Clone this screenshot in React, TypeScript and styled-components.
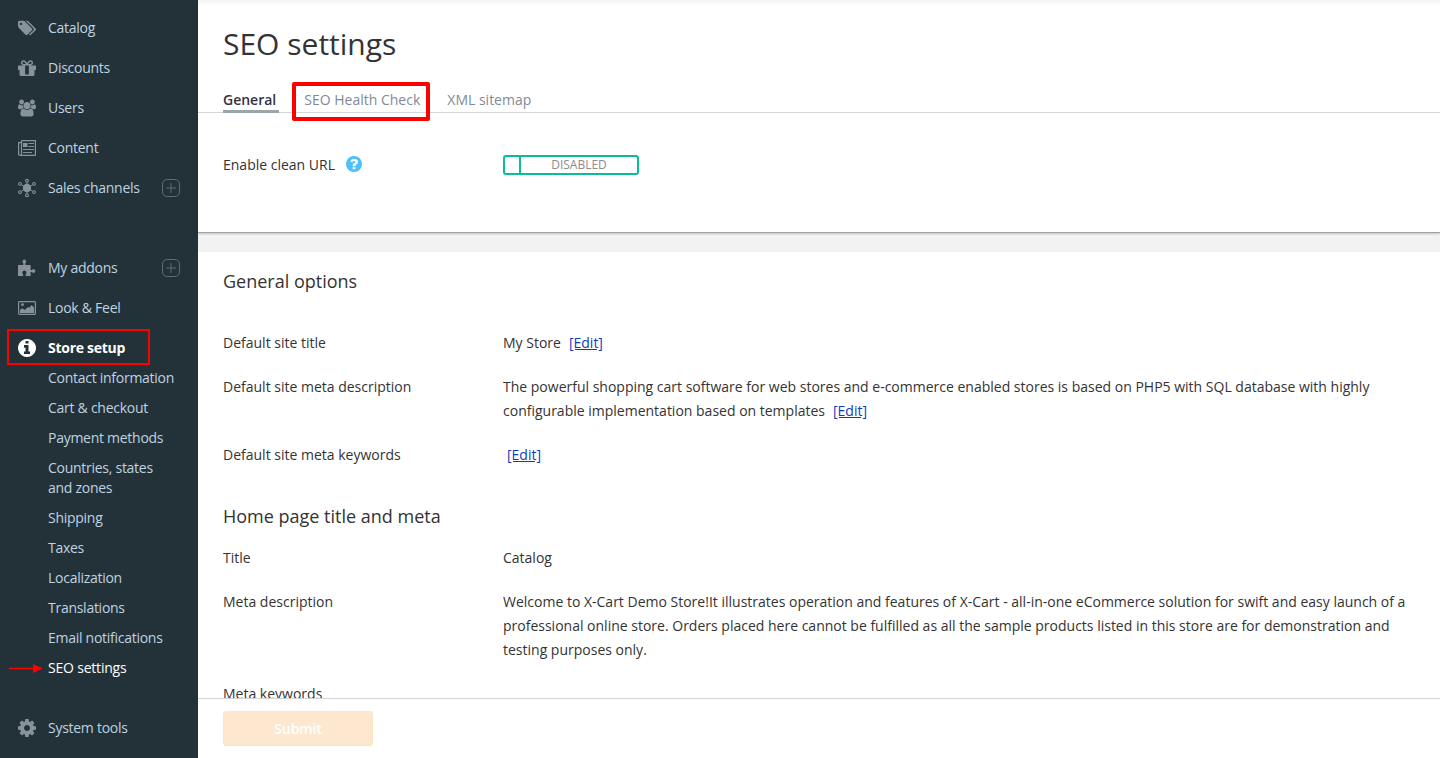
import React from "react";
import styled, { createGlobalStyle, css } from "styled-components";

const GlobalStyle = createGlobalStyle`
  * { box-sizing: border-box; }
  html, body { margin: 0; padding: 0; }
  body {
    font-family: "Open Sans", sans-serif;
    font-size: 14px;
    color: #333;
    background: #fff;
    overflow: hidden;
  }
`;

const Page = styled.div`
  display: flex;
  width: 100%;
  height: 758px;
  overflow: hidden;
`;

const Sidebar = styled.nav`
  flex: 0 0 198px;
  padding-top: 8px;
  background: #233239;
  letter-spacing: -0.27px;
`;

const MenuGroup = styled.div<{ $gap?: number }>`
  margin-top: ${(p) => p.$gap ?? 0}px;
`;

const MenuItem = styled.a<{ $active?: boolean }>`
  position: relative;
  display: flex;
  align-items: center;
  height: 40px;
  padding: 0 18px;
  color: ${(p) => (p.$active ? "#fff" : "#bfd3e0")};
  font-weight: ${(p) => (p.$active ? 700 : 400)};
`;

const MenuIcon = styled.svg<{ $active?: boolean }>`
  flex: none;
  width: 18px;
  height: 18px;
  margin-right: 12px;
  color: ${(p) => (p.$active ? "#fff" : "#87929a")};
`;

const MenuLabel = styled.span`
  flex: 1;
  padding-bottom: 1px;
  line-height: 19px;
  white-space: nowrap;
`;

const AddIcon = styled.svg`
  flex: none;
  width: 18px;
  height: 18px;
  color: #5e6b73;
`;

const SubMenu = styled.div`
  margin-top: -5px;
`;

const SubItem = styled.a<{ $active?: boolean }>`
  position: relative;
  display: block;
  padding: 5px 10px 5px 48px;
  line-height: 20px;
  color: ${(p) => (p.$active ? "#fff" : "#bfd3e0")};
  letter-spacing: ${(p) => (p.$active ? "-0.2px" : "inherit")};
  white-space: pre-line;
`;

const outline = css`
  position: absolute;
  pointer-events: none;
`;

const StoreHighlight = styled.span`
  ${outline}
  left: 7px;
  top: 1px;
  width: 143px;
  height: 36px;
  border: 2px solid #fe0000;
`;

const TabHighlight = styled.span`
  ${outline}
  left: -12px;
  top: -6px;
  width: 138px;
  height: 39px;
  border: 4px solid #fe0000;
  border-radius: 2px;
`;

const Arrow = styled.svg`
  ${outline}
  left: 9px;
  top: 11px;
  width: 34px;
  height: 9px;
`;

const Main = styled.main`
  flex: 1;
  min-width: 0;
  display: flex;
  flex-direction: column;
  background: #f2f2f2;
`;

const TopPanel = styled.section`
  flex: none;
  height: 233px;
  background: linear-gradient(#f2f2f2 0, #fff 5px);
  border-bottom: 1px solid #a3a3a3;
  box-shadow: 0 1px 2px rgba(0, 0, 0, 0.2);
`;

const Title = styled.h1`
  margin: 0;
  padding: 23px 25px 0;
  height: 88px;
  font-size: 30px;
  font-weight: 400;
  line-height: 42px;
`;

const Tabs = styled.div`
  display: flex;
  height: 25px;
  padding-left: 25px;
  border-bottom: 1px solid #d3d6da;
`;

const Tab = styled.a<{ $active?: boolean }>`
  position: relative;
  height: 25px;
  margin-right: 25px;
  padding-right: ${(p) => (p.$active ? 3 : 2)}px;
  line-height: 24px;
  color: ${(p) => (p.$active ? "#333340" : "#808b96")};
  font-weight: ${(p) => (p.$active ? 600 : 400)};
  border-bottom: ${(p) => (p.$active ? "3px solid #9ba6aa" : "0")};
  white-space: nowrap;
`;

const Setting = styled.div`
  display: flex;
  align-items: center;
  padding: 40px 25px 0;
  height: 64px;
`;

const SettingLabel = styled.div`
  display: flex;
  align-items: center;
  width: 280px;
  line-height: 24px;
`;

const HelpIcon = styled.svg`
  width: 16px;
  height: 16px;
  margin: -3px 0 0 11px;
  color: #4dc0ff;
`;

const Toggle = styled.div`
  display: flex;
  width: 136px;
  height: 20px;
  border: 2px solid #09bd97;
  border-radius: 3px;
`;

const ToggleHandle = styled.span`
  width: 16px;
  border-right: 2px solid #09bd97;
`;

const ToggleText = styled.span`
  flex: 1;
  font-size: 12px;
  line-height: 16px;
  text-align: center;
  color: #8c8c8c;
`;

const Content = styled.section`
  flex: 1;
  min-height: 0;
  margin-top: 19px;
  padding: 16px 25px 0;
  background: #fff;
  overflow: hidden;
`;

const Heading = styled.h2<{ $top: number; $bottom: number }>`
  margin: ${(p) => p.$top}px 0 ${(p) => p.$bottom}px;
  font-size: 18px;
  font-weight: 400;
  line-height: 26px;
`;

const Row = styled.div`
  display: flex;
  margin-bottom: 20px;
  line-height: 24px;
`;

const RowLabel = styled.div`
  flex: 0 0 280px;
`;

const RowValue = styled.div`
  white-space: pre;
`;

const EditLink = styled.a<{ $indent: number }>`
  margin-left: ${(p) => p.$indent}px;
  color: #0f3cbc;
  text-decoration: underline;
`;

const Footer = styled.footer`
  flex: none;
  height: 60px;
  padding: 12px 25px;
  background: #fff;
  border-top: 1px solid #d3d3d3;
`;

const Submit = styled.button`
  display: block;
  width: 150px;
  height: 35px;
  padding: 0;
  border: 1px solid #fde5c4;
  border-radius: 3px;
  background: #fde8cf;
  color: #fff;
  font: 600 14px "Open Sans", sans-serif;
  letter-spacing: -0.1px;
`;

const icons = {
  tags: {
    box: "0 66 1899 1640",
    art: (
      <path d="M448 448q0-53-37.5-90.5t-90.5-37.5-90.5 37.5-37.5 90.5 37.5 90.5 90.5 37.5 90.5-37.5 37.5-90.5zm1067 576q0 53-37 90l-491 492q-39 37-91 37-53 0-90-37l-715-716q-38-37-64.5-101t-26.5-117v-416q0-52 38-90t90-38h416q53 0 117 26.5t102 64.5l715 714q37 39 37 91zm384 0q0 53-37 90l-491 492q-39 37-91 37-36 0-59-14t-53-45l470-470q37-37 37-90 0-52-37-91l-715-714q-38-38-102-64.5t-117-26.5h224q53 0 117 26.5t102 64.5l715 714q37 39 37 91z" />
    ),
  },
  gift: {
    box: "0 96 1536 1536",
    art: (
      <path d="M928 1356v-716h-320v716q0 25 18 38.5t46 13.5h192q28 0 46-13.5t18-38.5zm-456-844h195l-126-161q-26-31-69-31-40 0-68 28t-28 68 28 68 68 28zm688-96q0-40-28-68t-68-28q-43 0-69 31l-125 161h194q40 0 68-28t28-68zm376 256v320q0 14-9 23t-23 9h-96v416q0 40-28 68t-68 28h-1088q-40 0-68-28t-28-68v-416h-96q-14 0-23-9t-9-23v-320q0-14 9-23t23-9h440q-93 0-158.5-65.5t-65.5-158.5 65.5-158.5 158.5-65.5q107 0 168 77l128 165 128-165q61-77 168-77 93 0 158.5 65.5t65.5 158.5-65.5 158.5-158.5 65.5h440q14 0 23 9t9 23z" />
    ),
  },
  users: {
    box: "0 -64 1920 1920",
    art: (
      <path d="M593 896q-162 5-265 128h-134q-82 0-138-40.5t-56-118.5q0-353 124-353 6 0 43.5 21t97.5 42.5 119 21.5q67 0 133-23-5 37-5 66 0 139 81 256zm1071 637q0 120-73 189.5t-194 69.5h-874q-121 0-194-69.5t-73-189.5q0-53 3.5-103.5t14-109 26.5-108.5 43-97.5 62-81 85.5-53.5 111.5-20q10 0 43 21.5t73 48 107 48 135 21.5 135-21.5 107-48 73-48 43-21.5q61 0 111.5 20t85.5 53.5 62 81 43 97.5 26.5 108.5 14 109 3.5 103.5zm-1024-1277q0 106-75 181t-181 75-181-75-75-181 75-181 181-75 181 75 75 181zm704 384q0 159-112.5 271.5t-271.5 112.5-271.5-112.5-112.5-271.5 112.5-271.5 271.5-112.5 271.5 112.5 112.5 271.5zm576 225q0 78-56 118.5t-138 40.5h-134q-103-123-265-128 81-117 81-256 0-29-5-66 66 23 133 23 59 0 119-21.5t97.5-42.5 43.5-21q124 0 124 353zm-128-609q0 106-75 181t-181 75-181-75-75-181 75-181 181-75 181 75 75 181z" />
    ),
  },
  news: {
    box: "0 0 18 18",
    art: (
      <>
        <path
          d="M3.500 1.600h13.900v14.800H2a1.400 1.400 0 0 1-1.400-1.400V3.600h2.900M3.500 1.600V15q0 1.400-1.500 1.400"
          fill="none"
          stroke="currentColor"
          strokeWidth="1.200"
        />
        <path d="M5 4h4.500v4H5zM10.500 4H16v1h-5.500zM10.500 7H16v1h-5.500zM5 10h11v1H5zM5 13h9v1H5z" />
      </>
    ),
  },
  hub: {
    box: "0 0 18 18",
    art: (
      <>
        <circle cx="9" cy="9" r="4.200" />
        <path
          d="M9 9V3M9 9v6M9 9L3.600 5.900M9 9l5.400-3.100M9 9l-5.400 3.100M9 9l5.400 3.100"
          stroke="currentColor"
        />
        <g fill="none" stroke="currentColor" strokeWidth="1.100">
          <circle cx="9" cy="1.800" r="1.400" />
          <circle cx="9" cy="16.200" r="1.400" />
          <circle cx="2" cy="4.900" r="1.400" />
          <circle cx="16" cy="4.900" r="1.400" />
          <circle cx="2" cy="13.100" r="1.400" />
          <circle cx="16" cy="13.100" r="1.400" />
        </g>
      </>
    ),
  },
  puzzle: {
    box: "0 0 18 18",
    art: (
      <path d="M0 6h4.400Q5.600 6 5.600 5L4.700 3.600A1.900 1.900 0 1 1 7.900 3.600L7 5Q7 6 8.200 6H12.600V10.200Q12.600 11.300 13.500 11.300L14.500 10.600A1.800 1.800 0 1 1 14.500 13.500L13.500 12.800Q12.600 12.800 12.600 13.800V17H8.500Q7.500 17 7.500 16L8.200 14.700A2.100 2.100 0 1 0 4.600 14.700L5.300 16Q5.300 17 4.300 17H0z" />
    ),
  },
  image: {
    box: "0 0 18 18",
    art: (
      <>
        <rect x=".6" y="2.600" width="16.800" height="12.800" rx=".8" fill="none" stroke="currentColor" strokeWidth="1.200" />
        <circle cx="4.500" cy="5.700" r="1.400" />
        <path d="M2 14v-3l2.200-1.800L6.700 11l3.300-3 1.400.8L13.700 6 16 8.500V14z" />
      </>
    ),
  },
  info: {
    box: "0 128 1536 1536",
    art: (
      <path d="M1024 1376v-160q0-14-9-23t-23-9h-96v-512q0-14-9-23t-23-9h-320q-14 0-23 9t-9 23v160q0 14 9 23t23 9h96v320h-96q-14 0-23 9t-9 23v160q0 14 9 23t23 9h448q14 0 23-9t9-23zm-128-896v-160q0-14-9-23t-23-9h-192q-14 0-23 9t-9 23v160q0 14 9 23t23 9h192q14 0 23-9t9-23zm640 416q0 209-103 385.500t-279.500 279.500-385.500 103-385.500-103-279.500-279.500-103-385.500 103-385.500 279.500-279.500 385.500-103 385.500 103 279.500 279.500 103 385.500z" />
    ),
  },
  cog: {
    box: "0 128 1536 1536",
    art: (
      <path d="M1024 896q0-106-75-181t-181-75-181 75-75 181 75 181 181 75 181-75 75-181zm512-109v222q0 12-8 23t-20 13l-185 28q-19 54-39 91 35 50 107 138 10 12 10 25t-9 23q-27 37-99 108t-94 71q-12 0-26-9l-138-108q-44 23-91 38-16 136-29 186-7 28-36 28h-222q-14 0-24.500-8.500t-11.500-21.500l-28-184q-49-16-90-37l-141 107q-10 9-25 9-14 0-25-11-126-114-165-168-7-10-7-23 0-12 8-23 15-21 51-66.500t54-70.500q-27-50-41-99l-183-27q-13-2-21-12.500t-8-23.500v-222q0-12 8-23t19-13l186-28q14-46 39-92-40-57-107-138-10-12-10-24 0-10 9-23 26-36 98.500-107.500t94.500-71.500q13 0 26 10l138 107q44-23 91-38 16-136 29-186 7-28 36-28h222q14 0 24.500 8.500t11.500 21.500l28 184q49 16 90 37l142-107q9-9 24-9 13 0 25 10 129 119 165 170 7 8 7 22 0 12-8 23-15 21-51 66.500t-54 70.500q26 50 41 98l183 28q13 2 21 12.500t8 23.500z" />
    ),
  },
};

type IconName = keyof typeof icons;

interface EntryProps {
  icon: IconName;
  label: string;
  active?: boolean;
  addable?: boolean;
}

function Entry({ icon, label, active, addable }: EntryProps) {
  return (
    <MenuItem $active={active}>
      <MenuIcon $active={active} viewBox={icons[icon].box} fill="currentColor">
        {icons[icon].art}
      </MenuIcon>
      <MenuLabel>{label}</MenuLabel>
      {addable && (
        <AddIcon viewBox="0 0 18 18" fill="none" stroke="currentColor">
          <rect x=".5" y=".5" width="17" height="17" rx="4.500" />
          <path d="M9 4v10M4 9h10" />
        </AddIcon>
      )}
      {active && <StoreHighlight />}
    </MenuItem>
  );
}

const subItems = [
  "Contact information",
  "Cart & checkout",
  "Payment methods",
  "Countries, states\nand zones",
  "Shipping",
  "Taxes",
  "Localization",
  "Translations",
  "Email notifications",
];

export default function App() {
  return (
    <Page>
      <GlobalStyle />
      <Sidebar>
        <MenuGroup>
          <Entry icon="tags" label="Catalog" />
          <Entry icon="gift" label="Discounts" />
          <Entry icon="users" label="Users" />
          <Entry icon="news" label="Content" />
          <Entry icon="hub" label="Sales channels" addable />
        </MenuGroup>
        <MenuGroup $gap={40}>
          <Entry icon="puzzle" label="My addons" addable />
          <Entry icon="image" label="Look & Feel" />
          <Entry icon="info" label="Store setup" active />
          <SubMenu>
            {subItems.map((item) => (
              <SubItem key={item}>{item}</SubItem>
            ))}
            <SubItem $active>
              SEO settings
              <Arrow viewBox="0 0 34 9">
                <path d="M0 3.700h24V0l10 4.500L24 9V5.300H0z" fill="#fe0000" />
              </Arrow>
            </SubItem>
          </SubMenu>
        </MenuGroup>
        <MenuGroup $gap={25}>
          <Entry icon="cog" label="System tools" />
        </MenuGroup>
      </Sidebar>
      <Main>
        <TopPanel>
          <Title>SEO settings</Title>
          <Tabs>
            <Tab $active>General</Tab>
            <Tab>
              SEO Health Check
              <TabHighlight />
            </Tab>
            <Tab>XML sitemap</Tab>
          </Tabs>
          <Setting>
            <SettingLabel>
              Enable clean URL
              <HelpIcon viewBox="0 128 1536 1536" fill="currentColor">
                <path d="M896 1376v-192q0-14-9-23t-23-9h-192q-14 0-23 9t-9 23v192q0 14 9 23t23 9h192q14 0 23-9t9-23zm256-672q0-88-55.500-163t-138.500-116-170-41q-243 0-371 213-15 24 8 42l132 100q7 6 19 6 16 0 25-12 53-68 86-92 34-24 86-24 48 0 85.500 26t37.500 59q0 38-20 61t-68 45q-63 28-115.500 86.500t-52.500 125.500v36q0 14 9 23t23 9h192q14 0 23-9t9-23q0-19 21.500-49.500t54.500-49.500q32-18 49-28.500t46-35 44.500-48 28-60.500 12.500-81zm384 192q0 209-103 385.500t-279.500 279.500-385.500 103-385.500-103-279.500-279.500-103-385.500 103-385.500 279.500-279.500 385.500-103 385.500 103 279.500 279.500 103 385.500z" />
              </HelpIcon>
            </SettingLabel>
            <Toggle>
              <ToggleHandle />
              <ToggleText>DISABLED</ToggleText>
            </Toggle>
          </Setting>
        </TopPanel>
        <Content>
          <Heading $top={0} $bottom={37}>General options</Heading>
          <Row>
            <RowLabel>Default site title</RowLabel>
            <RowValue>
              My Store<EditLink $indent={8}>[Edit]</EditLink>
            </RowValue>
          </Row>
          <Row>
            <RowLabel>Default site meta description</RowLabel>
            <RowValue>
              {"The powerful shopping cart software for web stores and e-commerce enabled stores is based on PHP5 with SQL database with highly\nconfigurable implementation based on templates"}
              <EditLink $indent={8}>[Edit]</EditLink>
            </RowValue>
          </Row>
          <Row>
            <RowLabel>Default site meta keywords</RowLabel>
            <RowValue>
              <EditLink $indent={4}>[Edit]</EditLink>
            </RowValue>
          </Row>
          <Heading $top={36} $bottom={17}>Home page title and meta</Heading>
          <Row>
            <RowLabel>Title</RowLabel>
            <RowValue>Catalog</RowValue>
          </Row>
          <Row>
            <RowLabel>Meta description</RowLabel>
            <RowValue>
              {"Welcome to X-Cart Demo Store!It illustrates operation and features of X-Cart - all-in-one eCommerce solution for swift and easy launch of a\nprofessional online store. Orders placed here cannot be fulfilled as all the sample products listed in this store are for demonstration and\ntesting purposes only."}
            </RowValue>
          </Row>
          <Row>
            <RowLabel>Meta keywords</RowLabel>
          </Row>
        </Content>
        <Footer>
          <Submit>Submit</Submit>
        </Footer>
      </Main>
    </Page>
  );
}
